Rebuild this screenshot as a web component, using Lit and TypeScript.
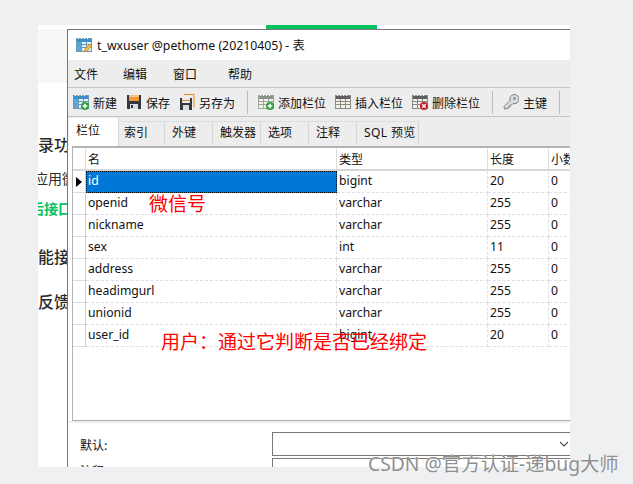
import { LitElement, html, css, svg } from "lit";
import { customElement } from "lit/decorators.js";

const tableBase = (hdr: string, cell: string, line: string) => svg`
  <rect x="0.5" y="1.5" width="15" height="13" fill="${cell}" stroke="${line}"/>
  <rect x="1" y="2" width="14" height="3" fill="${hdr}"/>
  <path d="M2 1.5h1M5 1.5h1M8 1.5h1M11 1.5h1" stroke="#fff"/>
  <path d="M1 7.5h14M1 10.5h14M5.5 5v9M10.5 5v9" stroke="${line}" fill="none"/>`;

const plus = svg`<circle cx="12" cy="12" r="4" fill="#2f9e3f"/><path d="M9.7 12h4.6M12 9.7v4.6" stroke="#fff" stroke-width="1.6"/>`;
const cross = svg`<circle cx="12" cy="12" r="4" fill="#c8202c"/><path d="M10.3 10.3l3.4 3.4M13.7 10.3l-3.4 3.4" stroke="#fff" stroke-width="1.3"/>`;

const wrap = (c: unknown) => html`<svg class="ic" viewBox="0 0 16 16" width="16" height="16">${c}</svg>`;

const floppy = svg`
  <path d="M1 1h14v14H1z" fill="#33383f"/>
  <rect x="3" y="1" width="10" height="6" fill="#f09a3a"/>
  <rect x="3" y="1" width="10" height="2" fill="#f6c27e"/>
  <rect x="4" y="10" width="8" height="5" fill="#d9dce0"/>
  <rect x="5" y="11" width="2" height="3" fill="#33383f"/>`;

const icons: Record<string, unknown> = {
  add: wrap(svg`${tableBase("#3d8fc9", "#e4f1fa", "#6f96ad")}<rect x="1" y="5" width="4" height="9" fill="#5aa7dc"/>${plus}`),
  save: wrap(floppy),
  saveas: wrap(svg`
    <path d="M1 4h12v12H1z" fill="#33383f"/>
    <rect x="3" y="4" width="8" height="5" fill="#e9e9e9"/>
    <rect x="4" y="11" width="6" height="5" fill="#d9dce0"/>
    <path d="M3 6.500h8" stroke="#e8862a"/>
    <path d="M5 .5h10v13" fill="none" stroke="#e8862a"/>`),
  addcol: wrap(svg`${tableBase("#8d9186", "#f2f2ec", "#a0a39a")}${plus}`),
  ins: wrap(svg`${tableBase("#5e5e5e", "#f4f0e6", "#8a8a8a")}`),
  del: wrap(svg`${tableBase("#5e5e5e", "#f4f0e6", "#8a8a8a")}${cross}`),
  key: wrap(svg`
    <path d="M1.5 15 1 12.5 7 6.5a4.6 4.6 0 1 1 3 3l-1.500 1.500H7v2H5v1.500z" fill="#d8dadb" stroke="#7d8589"/>
    <circle cx="11.500" cy="4.500" r="1.300" fill="#7d8589"/>`),
};

const toolbar: (string | [string, string])[] = [
  ["add", "新建"], ["save", "保存"], ["saveas", "另存为"], "|",
  ["addcol", "添加栏位"], ["ins", "插入栏位"], ["del", "删除栏位"], "|",
  ["key", "主键"], "|",
];

const rows = [
  ["id", "bigint", "20"],
  ["openid", "varchar", "255"],
  ["nickname", "varchar", "255"],
  ["sex", "int", "11"],
  ["address", "varchar", "255"],
  ["headimgurl", "varchar", "255"],
  ["unionid", "varchar", "255"],
  ["user_id", "bigint", "20"],
];

const tabs = ["栏位", "索引", "外键", "触发器", "选项", "注释", "SQL 预览"];

@customElement("app-root")
export class AppRoot extends LitElement {
  static styles = css`
    :host {
      display: block;
      position: relative;
      width: 633px;
      height: 484px;
      overflow: hidden;
      padding: 25px 63px 17px 38px;
      box-sizing: border-box;
      background: #eff0f2;
      font-family: "Noto Sans", "Noto Sans CJK SC", sans-serif;
      font-size: 12px;
      color: #111;
    }
    .panel {
      height: 100%;
      background: #fff;
      display: flex;
      flex-direction: column;
    }
    .topstrip {
      height: 4px;
      flex: none;
      padding-left: 228px;
    }
    .green {
      width: 111px;
      height: 4px;
      background: #07c160;
    }
    .body {
      flex: 1;
      min-height: 0;
      display: flex;
    }
    .side {
      width: 29px;
      flex: none;
      overflow: hidden;
      white-space: nowrap;
      background: linear-gradient(#f7f7f7 0 54px, #fff 54px);
      color: #2b2b2b;
      font-family: "Noto Sans CJK SC", sans-serif;
      display: flex;
      flex-direction: column;
    }
    .side div { line-height: 22px; }
    .s1 { font-size: 16px; font-weight: 500; margin-top: 104px; }
    .s2 { font-size: 14px; margin: 12px 0 0 -4px; }
    .s3 { font-size: 14px; margin: 8px 0 0 -8px; color: #07c160; font-weight: 700; }
    .s4 { font-size: 16px; font-weight: 500; margin-top: 26px; }
    .s5 { font-size: 16px; font-weight: 500; margin-top: 23px; }
    .win {
      flex: 1;
      min-width: 0;
      overflow: hidden;
      border-left: 1px solid #777;
      border-top: 1px solid #777;
      background: #fff;
      display: flex;
      flex-direction: column;
    }
    .dither {
      background: repeating-conic-gradient(#e9e9e9 0 25%, #f1f1f1 0 50%) 0 0 / 2px 2px;
    }
    .title {
      height: 30px;
      flex: none;
      display: flex;
      align-items: center;
      padding-left: 8px;
      gap: 5px;
      font-size: 12.300px;
      white-space: nowrap;
    }
    .menu {
      height: 27px;
      flex: none;
      display: grid;
      grid-template-columns: 49px 50px 55px 1fr;
      align-items: center;
      padding-left: 6px;
      font-family: "Noto Sans CJK SC", sans-serif;
      border-bottom: 1px solid #c4c4c4;
      box-sizing: content-box;
    }
    .tools {
      height: 28px;
      flex: none;
      display: flex;
      align-items: center;
      gap: 9px;
      padding-left: 5px;
      border-bottom: 1px solid #c4c4c4;
      white-space: nowrap;
      font-family: "Noto Sans CJK SC", sans-serif;
    }
    .tool { display: flex; align-items: center; gap: 4px; flex: none; }
    .ic { display: block; flex: none; }
    .sep {
      width: 1px;
      height: 23px;
      background: #bcbcbc;
      margin: 0 1px 0 3px;
      flex: none;
    }
    .tabs {
      height: 29px;
      flex: none;
      display: grid;
      grid-template-columns: 50px 46px 48px 48px 48px 48px 62px 1fr;
      padding-left: 1px;
      white-space: nowrap;
    }
    .tab {
      margin-top: 4px;
      height: 22px;
      line-height: 22px;
      padding-left: 7px;
      border-right: 1px solid #d6d6d6;
      border-top: 1px solid #dedede;
      box-sizing: content-box;
    }
    .tab.second { padding-left: 5px; }
    .tab.active {
      margin-top: 1px;
      height: 28px;
      line-height: 26px;
      background: #fff;
      padding-left: 7px;
      border-top: 0;
      border-right: 1px solid #d6d6d6;
      box-sizing: border-box;
      position: relative;
      z-index: 1;
    }
    .tab.last { letter-spacing: 0.4px; }
    .gridwrap {
      height: 271px;
      flex: none;
      margin-left: 4px;
      border-top: 2px solid #b0b4b4;
      border-left: 1px solid #b0b4b4;
      border-bottom: 1px solid #a8acac;
      box-sizing: content-box;
      overflow: hidden;
      background: #fff;
      padding-top: 1px;
    }
    .gridrow {
      display: grid;
      grid-template-columns: 13px 251px 151px 61px 100px;
      height: 22px;
      box-sizing: border-box;
      line-height: 20px;
      white-space: nowrap;
      font-size: 12.200px;
    }
    .gridrow > div {
      padding-left: 2px;
      border-right: 1px dashed #dedee4;
      border-bottom: 1px dashed #dedee4;
      overflow: hidden;
      position: relative;
    }
    .gridrow > div.ind { padding: 0; border-right: 1px solid #cfcfcf; border-bottom: 1px solid #dcdcdc; display: flex; align-items: center; justify-content: center; }
    .gridrow.head > div { border-right: 1px solid #dcdcdc; border-bottom: 2px solid #d8d8d8; font-family: "Noto Sans CJK SC", sans-serif; font-size: 12px; }
    .gridrow .sel {
      background: #0078d7;
      color: #fff;
      outline: 1px dotted #0a0a0a;
      outline-offset: -1px;
      border: 0;
    }
    .tri {
      width: 0;
      height: 0;
      border-left: 6px solid #000;
      border-top: 5px solid transparent;
      border-bottom: 5px solid transparent;
    }
    .gap3 { height: 2px; flex: none; }
    .form {
      flex: 1;
      min-height: 0;
      display: grid;
      grid-template-columns: 192px 300px;
      grid-auto-rows: 24px;
      row-gap: 2px;
      padding: 9px 0 0 12px;
      font-family: "Noto Sans CJK SC", sans-serif;
      overflow: hidden;
    }
    .form label { line-height: 25px; }
    .box {
      border: 1px solid #7a7a72;
      box-sizing: border-box;
      display: flex;
      align-items: center;
      justify-content: flex-end;
      width: 300px;
    }
    .chev { margin-right: 2px; }
    .note {
      position: absolute;
      color: #ff0000;
      font-family: "Noto Sans CJK SC", sans-serif;
      font-size: 19px;
      font-weight: 400;
      white-space: nowrap;
      line-height: 24px;
    }
    .n1 { left: 149px; top: 191px; }
    .n2 { left: 161px; top: 329px; }
    .mark {
      position: absolute;
      left: 368px;
      top: 452px;
      color: #8f8f8f;
      font-family: "Noto Sans", "Noto Sans CJK SC", sans-serif;
      font-size: 19.300px;
      line-height: 24px;
      white-space: nowrap;
      text-shadow: 0 0 1px #fff;
    }
  `;

  render() {
    return html`
      <div class="panel">
        <div class="topstrip"><div class="green"></div></div>
        <div class="body">
          <div class="side">
            <div class="s1">录功能</div>
            <div class="s2">应用微信</div>
            <div class="s3">后接口</div>
            <div class="s4">能接入</div>
            <div class="s5">反馈</div>
          </div>
          <div class="win">
            <div class="title">
              <svg class="ic" viewBox="0 0 16 16" width="16" height="16">
                ${tableBase("#3d8fc9", "#e4f1fa", "#6f96ad")}
                <rect x="1" y="5" width="4" height="9" fill="#5aa7dc"/>
                <path d="M8 15l1-3 5-5 2 2-5 5z" fill="#f0c040" stroke="#b07a20" stroke-width=".6"/>
              </svg>
              <span>t_wxuser @pethome (20210405) - 表</span>
            </div>
            <div class="menu dither">
              <span>文件</span><span>编辑</span><span>窗口</span><span>帮助</span>
            </div>
            <div class="tools dither">
              ${toolbar.map((t) =>
                t === "|"
                  ? html`<div class="sep"></div>`
                  : html`<div class="tool">${icons[t[0]]}<span>${t[1]}</span></div>`
              )}
            </div>
            <div class="tabs dither">
              ${tabs.map(
                (t, i) =>
                  html`<div class="tab ${i === 0 ? "active" : ""} ${i === 1 ? "second" : ""} ${i === 6 ? "last" : ""}">${t}</div>`
              )}
            </div>
            <div class="gridwrap">
              <div class="gridrow head">
                <div class="ind"></div><div>名</div><div>类型</div><div>长度</div><div>小数点</div>
              </div>
              ${rows.map(
                (r, i) => html`
                  <div class="gridrow">
                    <div class="ind">${i === 0 ? html`<div class="tri"></div>` : ""}</div>
                    <div class="${i === 0 ? "sel" : ""}">${r[0]}</div>
                    <div>${r[1]}</div>
                    <div>${r[2]}</div>
                    <div>0</div>
                  </div>`
              )}
            </div>
            <div class="gap3 dither"></div>
            <div class="form">
              <label>默认:</label>
              <div class="box">
                <svg class="chev" viewBox="0 0 10 6" width="10" height="6"><path d="M1 1l4 4 4-4" fill="none" stroke="#444" stroke-width="1.100"/></svg>
              </div>
              <label>注释:</label>
              <div class="box"></div>
            </div>
          </div>
        </div>
      </div>
      <div class="note n1">微信号</div>
      <div class="note n2">用户：通过它判断是否已经绑定</div>
      <div class="mark">CSDN @官方认证-递bug大师</div>
    `;
  }
}
